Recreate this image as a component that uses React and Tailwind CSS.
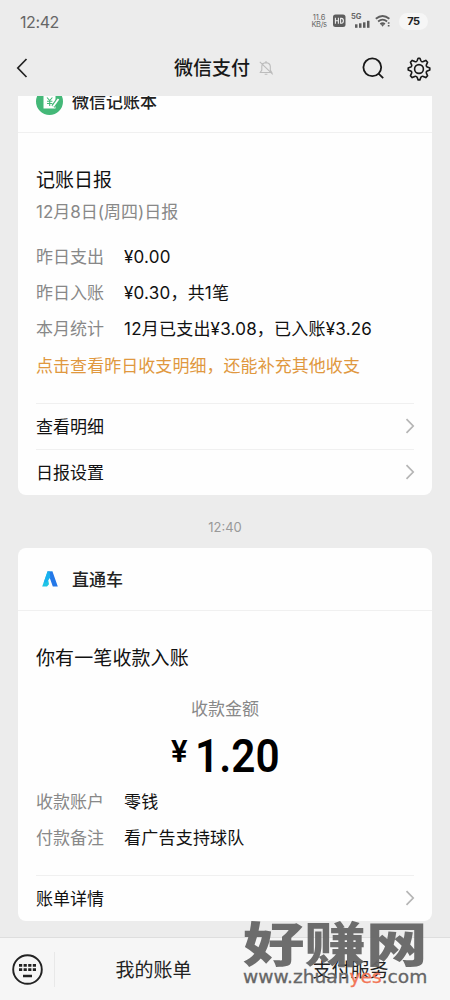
import React from "react";

const Chevron = () => (
  <svg className="-mr-px mb-0.5 h-4 w-2.5 shrink-0" viewBox="0 0 10 16" fill="none" stroke="#b5b5b5" strokeWidth="1.7">
    <path d="M1.5 1.2 8.2 8l-6.7 6.8" />
  </svg>
);

function Row({ label, children }) {
  return (
    <div className="flex h-9 items-center text-[17px]">
      <span className="w-[88px] text-[#888888]">{label}</span>
      <span className="tracking-[0.22px] text-[#111111]">{children}</span>
    </div>
  );
}

function LinkRow({ children }) {
  return (
    <div className="flex h-[46px] items-center justify-between border-t border-[#f0f0f0] text-[17px] text-[#111111]">
      <span className="pt-[3px]">{children}</span>
      <Chevron />
    </div>
  );
}

function StatusBar() {
  return (
    <div className="flex h-10 shrink-0 items-center justify-between pt-1 pr-[22px] pl-5 text-[#666666]">
      <span className="pb-px text-[16px] tracking-[-0.4px]">12:42</span>
      <div className="flex items-center pb-0.5">
        <div className="mr-[5px] w-4 text-center text-[7.5px] leading-[7px]">
          <div>11.6</div>
          <div className="tracking-[-0.4px]">KB/s</div>
        </div>
        <svg className="mr-[3px] h-3.5 w-[14px]" viewBox="0 0 14 14">
          <rect x="1" y="0.5" width="12.5" height="12.5" rx="2.5" fill="#5d5d5d" />
          <path d="M3.4 3.8v6M6.4 3.8v6M3.4 6.8h3M8.6 4.4h.8q2 0 2 2.4t-2 2.4h-.8z" fill="none" stroke="#eee" strokeWidth="1.1" />
        </svg>
        <div className="relative mr-[5px] h-4 w-[21px]">
          <span className="absolute top-0 left-0.5 text-[7.5px] leading-[8px] font-bold">5G</span>
          <svg className="absolute top-1 left-[6px] h-3 w-4" viewBox="0 0 16 12" fill="#5d5d5d">
            <rect x="0" y="7.3" width="2.5" height="3.5" />
            <rect x="4" y="6.3" width="2.5" height="4.5" />
            <rect x="8" y="5.3" width="2.5" height="5.5" />
            <rect x="12" y="3.8" width="2.5" height="7" />
          </svg>
        </div>
        <svg className="mr-2 h-3.5 w-4" viewBox="0 0 16 14" fill="none" stroke="#5d5d5d" strokeWidth="1.8">
          <path d="M.8 4.8q6.8-5.6 13.6 0M3.1 7.5q4.5-3.7 9 0M5.3 10.1q2.3-1.8 4.6 0" />
          <path d="m5.8 10.3 1.8 2.4 1.8-2.4z" fill="#5d5d5d" stroke="none" />
          <path d="M12.8 8.2h1.7v1.5h-1.7zM12.8 11h1.7v1.5h-1.7z" fill="#5d5d5d" stroke="none" />
        </svg>
        <span className="flex h-[17px] w-[29px] items-center justify-center rounded-full bg-[#f6f6f6] text-[11px] font-bold tracking-[-0.4px] text-[#222222]">
          75
        </span>
      </div>
    </div>
  );
}

function NavBar() {
  return (
    <div className="flex h-14 shrink-0 items-center pr-[19px] pl-4">
      <svg className="h-5 w-3 shrink-0" viewBox="0 0 12 20" fill="none" stroke="#222" strokeWidth="1.7">
        <path d="M10.5 1 1.8 10l8.7 9" />
      </svg>
      <h1 className="ml-[146px] shrink-0 pt-[3px] text-[19px] font-medium whitespace-nowrap text-[#181818]">微信支付</h1>
      <svg className="ml-[9px] h-4 w-[15px] shrink-0" viewBox="0 0 15 16" fill="none" stroke="#bcbcbc" strokeWidth="1.1">
        <path d="M1.3 12.5h11.4L11.3 10V6.3Q11 3 7 2.6 3 3 2.8 6.3V10zM5.7 14.2h2.7M7 1v1.5M.8 1.8l13 12.5" />
      </svg>
      <svg className="ml-auto h-[22px] w-[22px] shrink-0" viewBox="0 0 22 22" fill="none" stroke="#191919" strokeWidth="1.8">
        <circle cx="10.3" cy="10.3" r="8.9" />
        <path d="m16.6 16.6 4.6 4.6" />
      </svg>
      <svg className="mt-px ml-[23px] h-6 w-6 shrink-0" viewBox="0 0 24 24" fill="none" stroke="#191919" strokeWidth="1.6" strokeLinejoin="round">
        <path d="M11.1 1.2h1.8l1 2.6q.3.7 1 .9.7.2 1.3-.1l2.6-1.2 1.8 1.8-1.2 2.6q-.3.7 0 1.3.3.7.9 1l2.5 1v1.8l-2.5 1q-.7.3-.9 1-.3.7 0 1.3l1.2 2.6-1.8 1.8-2.6-1.2q-.7-.3-1.3 0-.7.2-1 .9l-1 2.6h-1.8l-1-2.6q-.3-.7-1-.9-.6-.3-1.3 0l-2.6 1.2-1.8-1.8 1.2-2.6q.3-.6 0-1.3-.2-.7-.9-1l-2.5-1v-1.8l2.5-1q.7-.3.9-1 .3-.6 0-1.3L3.4 5.2l1.8-1.8 2.6 1.2q.7.3 1.3.1.7-.2 1-.9z" />
        <circle cx="12" cy="12" r="4.4" />
      </svg>
    </div>
  );
}

function DailyCard() {
  return (
    <section className="h-[399px] rounded-b-lg bg-[#fefefe]">
      <div className="flex h-[37px] items-start border-b border-[#f0f0f0] pl-[18px]">
        <svg className="-mt-2 h-7 w-7 shrink-0" viewBox="0 0 28 28">
          <circle cx="13.5" cy="13.5" r="13.5" fill="#44b878" />
          <path d="M7.5 6h12v14.5h-12z" fill="#fff" />
          <path d="m11 9.5 2.7 3 2.7-3M13.7 12.5V18M11 13.2h5.4M11 15.5h5.4" fill="none" stroke="#44b878" strokeWidth="1.1" />
          <path d="m17 18.5 6-8" stroke="#44b878" strokeWidth="4" />
          <path d="m17.2 18.5 5.3-7.5" stroke="#fff" strokeWidth="1.8" />
        </svg>
        <span className="-mt-[7px] ml-2 text-[17px] leading-[26px] font-medium text-[#222222]">微信记账本</span>
      </div>
      <div className="px-[18px]">
        <h2 className="pt-[34px] text-[19px] leading-7 text-[#111111]">记账日报</h2>
        <p className="mt-[5px] mb-4 text-[17px] leading-6 text-[#888888]">12月8日(周四)日报</p>
        <Row label="昨日支出">¥0.00</Row>
        <Row label="昨日入账">¥0.30，共1笔</Row>
        <Row label="本月统计">12月已支出¥3.08，已入账¥3.26</Row>
        <p className="mb-[19px] flex h-9 items-center pt-0.5 text-[17px] tracking-[0.05px] text-[#e0983f]">
          点击查看昨日收支明细，还能补充其他收支
        </p>
        <LinkRow>查看明细</LinkRow>
        <LinkRow>日报设置</LinkRow>
      </div>
    </section>
  );
}

function PaymentCard() {
  return (
    <section className="h-[373px] rounded-lg bg-[#fefefe]">
      <div className="flex h-[63px] items-center border-b border-[#f0f0f0] pl-6">
        <svg className="h-4 w-4" viewBox="0 0 16 16">
          <path d="M5.5.5h5L6.2 9 7 13.2 5 15.5H.2z" fill="#20c5e5" />
          <path d="M5.5.5h5l5.3 15h-5z" fill="#2478e8" />
          <path d="M5.5.5h2l.8 6-4 5H1.8z" fill="#1ab1ef" />
        </svg>
        <span className="ml-[14px] pt-1 text-[17px] font-medium text-[#222222]">直通车</span>
      </div>
      <div className="px-[18px]">
        <h2 className="pt-[34px] text-[19px] leading-7 tracking-[0.1px] text-[#111111]">你有一笔收款入账</h2>
        <p className="mt-[24px] text-center text-[17px] leading-6 text-[#888888]">收款金额</p>
        <div className="flex h-[71px] items-start pt-[7px] pl-[135px] font-[Roboto] font-semibold text-black">
          <span className="w-[24px] text-[31px] leading-[48px]">¥</span>
          <span className="origin-left scale-x-[0.92] text-[46px] leading-[56px]">1.20</span>
        </div>
        <div className="-mt-[7px] mb-[18px]">
          <Row label="收款账户">零钱</Row>
          <Row label="付款备注">看广告支持球队</Row>
        </div>
        <LinkRow>账单详情</LinkRow>
      </div>
    </section>
  );
}

function Footer() {
  return (
    <footer className="flex h-[63px] shrink-0 items-center border-t border-[#dedede] bg-[#f6f6f6] pl-3 text-[19px] text-[#222222]">
      <svg className="h-[31px] w-[31px]" viewBox="0 0 31 31" fill="none" stroke="#222">
        <circle cx="15.5" cy="15.5" r="14.3" strokeWidth="1.9" />
        <path d="M7 11.3h17M7 15.6h17" strokeWidth="2.8" strokeDasharray="3.2 1.4" />
        <path d="M11 22h9" strokeWidth="2.5" />
      </svg>
      <div className="ml-[11px] h-[35px] w-px bg-[#e8e8e8]" />
      <div className="w-[197px] pt-1 text-center">我的账单</div>
      <div className="w-[197px] pt-1 text-center">支付服务</div>
    </footer>
  );
}

function Watermark() {
  return (
    <div className="pointer-events-none absolute top-[914px] left-[243px] h-[80px] w-[186px] text-[#666666]">
      <div className="origin-left scale-x-[1.28] text-[48px] leading-[62px] font-black whitespace-nowrap opacity-95">好赚网</div>
      <div className="absolute top-[51px] left-0 origin-left scale-x-[1.095] font-['DejaVu_Sans'] text-[17px] leading-6 whitespace-nowrap [-webkit-text-stroke:0.3px]">
        www.zhuan<span className="text-[#f27658]">yes</span>.com
      </div>
    </div>
  );
}

export default function App() {
  return (
    <div className="relative flex h-[1000px] w-[450px] flex-col overflow-hidden bg-[#ececec] font-[Inter,'Noto_Sans_CJK_SC',sans-serif]">
      <StatusBar />
      <NavBar />
      <main className="min-h-0 flex-1 overflow-hidden px-[18px]">
        <DailyCard />
        <div className="flex h-[53px] items-center justify-center pt-[12px] text-[13px] text-[#999999]">12:40</div>
        <PaymentCard />
      </main>
      <Footer />
      <Watermark />
    </div>
  );
}
